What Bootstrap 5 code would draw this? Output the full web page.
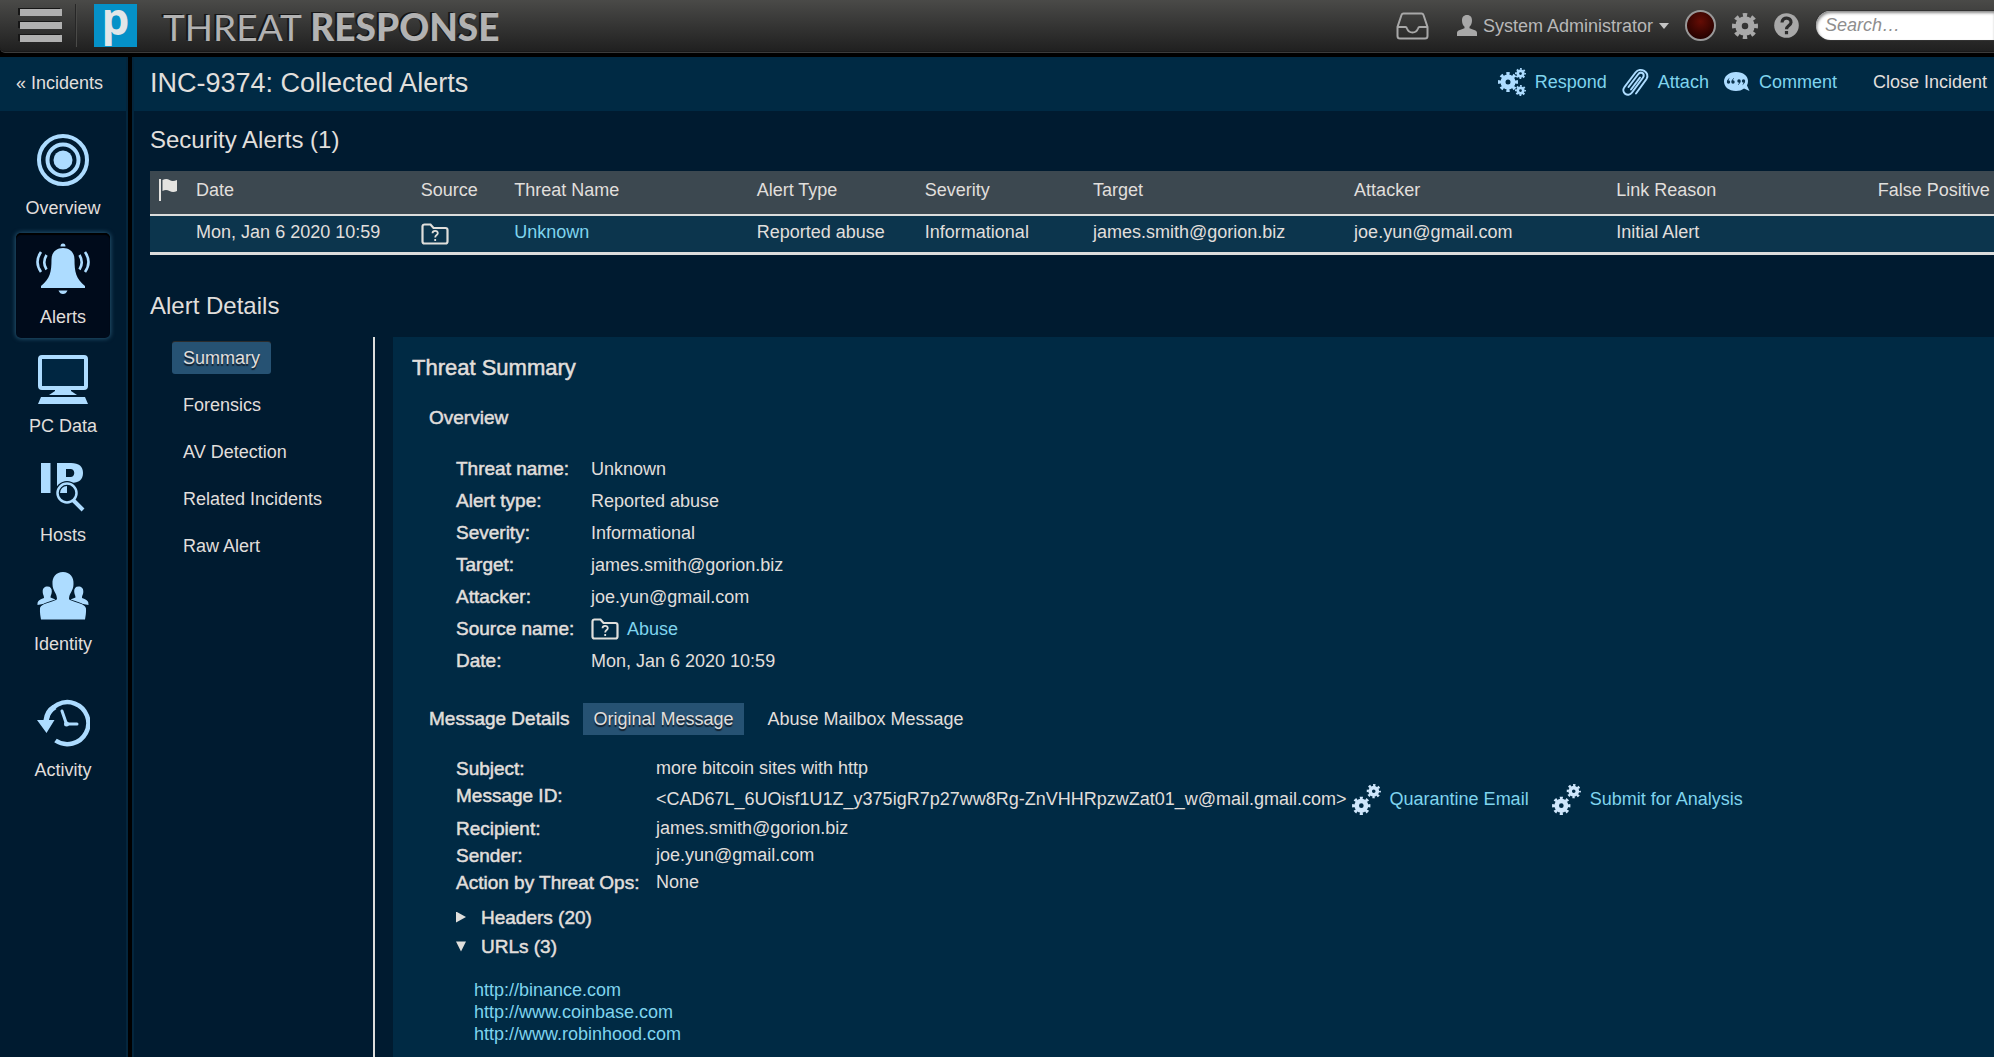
<!DOCTYPE html>
<html lang="en">
<head>
<meta charset="utf-8">
<meta name="viewport" content="width=device-width, initial-scale=1">
<title>Threat Response - INC-9374</title>
<link rel="stylesheet" href="https://cdn.jsdelivr.net/npm/bootstrap@5.3.0/dist/css/bootstrap.min.css">
<style>
:root{--ink:#e0dfdc;--deep:#001b30;--panel:#002a44;--sky:#addcff;--link:#7fd4ee;--pick:#265273}
body{font:18px/24px "Liberation Sans",Arial,sans-serif;color:var(--ink);background:#000}
a{color:var(--link);text-decoration:none}
a:hover{color:#fff}
h1,h2,h3,h4,dl,dd,dt{margin:0;font-weight:400}
svg{flex:none;display:block}
.plain{background:none;border:0;padding:0;color:inherit;font:inherit}
.ink{color:var(--ink)}
/* top bar */
.topbar{height:53px;background:linear-gradient(#4a4a48,#1f1f1f);border-bottom:1px solid #3c3c3c;border-radius:0 0 0 5px;box-shadow:inset 0 -1px #191919;color:#b8b8b8;padding:0 0 1px 20px}
.burger{width:42px;height:33px;justify-content:space-between}
.burger span{height:7px;background:#b0b0b0;box-shadow:-2px -1px #161616}
.sep{width:2px;height:43px;background:#262626;border-right:1px solid #4a4a48;margin-left:13px}
.brandmark{width:43px;height:43px;background:#0591c8;color:#e2e6e8;font:700 44px/28px "Open Sans",sans-serif;margin-left:17px;text-align:center}
.brand{font:400 37px/40px Lato,sans-serif;color:#b2b2b2;text-shadow:-2px -1px #161616;margin-left:26px;padding-top:2px}
.brand b{font-weight:900}
.user{gap:6px;margin-left:28px}
.caret{border:5px solid transparent;border-top:6px solid #c4c4c4;border-bottom:0}
.lamp{width:31px;height:31px;border-radius:50%;border:2px solid #999;background:radial-gradient(circle at 50% 35%,#650d05,#280200 75%)}
.search{width:178px;height:29px;border:0;border-radius:15px 0 0 15px;background:#fff;font:italic 18px "Liberation Sans",Arial,sans-serif;padding:0 9px;box-shadow:inset 1px 2px 3px #888,0 0 0 1px #333;margin-left:17px}
.search::placeholder{color:#8e8e8e}
/* side rail */
.rail{width:128px;background:var(--deep);border-right:2px solid #04263d}
.rail-list{padding-top:13px}
.titlebar{height:54px;background:var(--panel);padding-bottom:2px}
.rail-item{width:94px;padding:9px 0;margin-bottom:4px;gap:9px;color:var(--ink);border-radius:5px}
.rail-item:hover{color:#fff}
.rail-item svg{color:var(--sky)}
.rail-item.active{background:#000b1b;box-shadow:0 0 4px 1px #23506b,inset 0 2px 1px #000}
.late{margin-top:17px}
/* content */
.main{background:var(--deep);margin-left:4px;border-left:2px solid #04263d;min-width:0}
.content{padding:14px 0 0 16px}
.title-text{font-size:27px;line-height:30px}
.section-title{font-size:24px;line-height:30px}
.actions{gap:14px;padding:0 7px 2px 0}
.closer{margin-left:22px}
.alerts{table-layout:fixed;width:100%;margin:16px 0 36px}
.alerts th,.alerts td{font-weight:400;padding:0;white-space:nowrap}
.alerts th{background:#3c4850;height:44px;padding-bottom:6px;vertical-align:middle}
.alerts td{background:#0c354d;height:38px;padding-bottom:4px;vertical-align:middle}
.alerts thead{border-bottom:2px solid #dcdddc}
.alerts tbody{border-bottom:3px solid #dcdddc}
.alerts td svg{margin-top:5px}
.subnav{width:225px;padding:5px 0 0 22px;gap:15px;border-right:2px solid #dcdddc}
.pill{display:block;padding:4px 11px;color:var(--ink)}
.pill.active{background:var(--pick);border-radius:3px;box-shadow:0 -1px #2c2c2c;text-shadow:0 2px 1px #101c28}
.tabs-row{gap:14px;margin:26px 0 20px}
.tab{padding:4px 10px;color:var(--ink)}
.tab.active{background:var(--pick);text-shadow:0 2px 1px #101c28}
.panel-box{background:var(--panel);margin-left:18px;padding:16px 19px 8px;min-width:0}
.panel-body{margin-left:17px}
.strong{font-size:19px;line-height:24px;-webkit-text-stroke:.5px currentColor}
h4.strong{font-size:19px}
.panel-title{font-size:22px;line-height:30px;-webkit-text-stroke:.5px currentColor;margin-bottom:23px}
.facts{display:grid;margin-left:27px}
.facts.over{grid-template-columns:135px 1fr;grid-auto-rows:32px;align-items:center;margin-top:23px}
.facts.msg{grid-template-columns:200px 1fr;grid-auto-rows:minmax(27px,auto)}
.facts.msg dt,.facts.msg dd{line-height:27px}
.msgid{padding-top:2px}
.runner{gap:9px;margin-left:5px;margin-right:18px}
.folds{margin-top:7px}
.fold summary{list-style:none;line-height:29px;gap:15px}
.fold summary::-webkit-details-marker{display:none}
.tri{width:10px;height:11px;background:currentColor;clip-path:polygon(0 0,100% 50%,0 100%)}
.fold[open] .tri{clip-path:polygon(0 10%,100% 10%,50% 100%)}
.urls{margin:18px 0 0 18px;line-height:22px}
</style>
</head>
<body>
<svg width="0" height="0" class="position-absolute" aria-hidden="true">
  <symbol id="cog" viewBox="-12 -12 24 24"><circle r="6" fill="none" stroke="currentColor" stroke-width="6"/><circle r="10" fill="none" stroke="currentColor" stroke-width="4" pathLength="16" stroke-dasharray="1 1" stroke-dashoffset=".5"/></symbol>
  <symbol id="folder" viewBox="0 0 28 22"><path d="M1.5 3.5a2 2 0 0 1 2-2h6l3 3.500h12a2 2 0 0 1 2 2v11.500a2 2 0 0 1-2 2h-21a2 2 0 0 1-2-2z" fill="none" stroke="currentColor" stroke-width="2.200"/><path d="M11.500 10.200c.2-3.400 5.500-3 5.300.1-.1 1.700-2.600 1.700-2.600 4.100M14.200 16v2" fill="none" stroke="currentColor" stroke-width="1.800"/></symbol>
  <symbol id="twocogs" viewBox="0 0 28 30"><use href="#cog" x="0" y="12" width="18" height="18"/><use href="#cog" x="14" y="0" width="14" height="14"/></symbol>
</svg>

<div class="min-vh-100 d-flex flex-column">
<header class="topbar d-flex align-items-center">
  <button class="plain burger d-flex flex-column" aria-label="Menu"><span></span><span></span><span></span></button>
  <div class="sep"></div>
  <div class="brandmark">p</div>
  <div class="brand">THREAT <b>RESPONSE</b></div>
  <div class="ms-auto d-flex align-items-center">
    <svg width="33" height="28" viewBox="0 0 33 28" fill="none" stroke="#a8a8a8" stroke-width="2"><path d="M7.500 1.500h18q1.500 0 2 1.500l4 12v9q0 2.500-2.500 2.500h-25q-2.500 0-2.500-2.500v-9l4-12q.5-1.500 2-1.500zM2 15h7.500q1 0 1.500 1.500 1.500 4 5.500 4t5.500-4q.5-1.500 1.500-1.500h7.500"/></svg>
    <button class="plain user d-flex align-items-center">
      <svg width="20" height="21" viewBox="0 0 20 21" fill="#a8a8a8"><path d="M10 0c3.500 0 5 2.400 5 5.400 0 2.500-.8 4.700-2.500 6.300v1.600l6 2.200q1.500.7 1.500 2.200V21H0v-3.300q0-1.500 1.500-2.200l6-2.200v-1.600C5.800 10.100 5 7.900 5 5.400 5 2.400 6.500 0 10 0z"/></svg>
      System Administrator<span class="caret"></span>
    </button>
    <div class="lamp ms-3"></div>
    <button class="plain ms-3" aria-label="Settings"><svg width="26" height="26" color="#a8a8a8"><use href="#cog"/></svg></button>
    <button class="plain ms-3" aria-label="Help"><svg width="25" height="25" viewBox="0 0 25 25"><circle cx="12.500" cy="12.500" r="12.300" fill="#a8a8a8"/><path d="M8 9.500c.3-6.200 9.300-5.600 9 0-.2 3-4.500 3-4.500 6.800M12.500 18v3.200" fill="none" stroke="#2c2c2c" stroke-width="3.200"/></svg></button>
    <input class="search" type="text" placeholder="Search…" aria-label="Search">
  </div>
</header>

<div class="d-flex flex-grow-1 mt-1">
  <nav class="rail flex-shrink-0">
    <div class="titlebar d-flex align-items-center ps-3"><a href="#" class="ink">« Incidents</a></div>
    <div class="rail-list d-flex flex-column align-items-center">
      <a href="#" class="rail-item d-flex flex-column align-items-center">
        <svg width="54" height="54" viewBox="0 0 54 54" fill="none" stroke="currentColor"><circle cx="27" cy="27" r="24" stroke-width="4"/><circle cx="27" cy="27" r="15.500" stroke-width="4"/><circle cx="27" cy="27" r="9.500" fill="currentColor" stroke="none"/></svg>
        Overview</a>
      <a href="#" class="rail-item active d-flex flex-column align-items-center">
        <svg width="54" height="54" viewBox="0 0 54 54" fill="currentColor"><path d="M24.500 4.500a2.500 3 0 0 1 5 0zM27 6c7 0 11.500 4.500 11.500 11.500 0 13 1.500 19 10.500 26.500v2H5v-2c9-7.500 10.500-13.500 10.500-26.500C15.500 10.500 20 6 27 6zM22.500 48.500h9q-1.500 3.500-4.500 3.500t-4.500-3.500z"/><path d="M5 10q-7 10 0 20M10.500 13q-4.500 7.500 0 14.500M49 10q7 10 0 20M43.500 13q4.500 7.500 0 14.500" fill="none" stroke="currentColor" stroke-width="2.600"/></svg>
        Alerts</a>
      <a href="#" class="rail-item d-flex flex-column align-items-center">
        <svg width="54" height="54" viewBox="0 0 54 54" fill="currentColor"><rect x="4" y="6" width="46" height="31" rx="2" fill="#002641" stroke="currentColor" stroke-width="4"/><path d="M19 38h16v2l6 4H13l6-4zM5 46h44l3 7H2z"/></svg>
        PC Data</a>
      <a href="#" class="rail-item d-flex flex-column align-items-center">
        <svg width="54" height="54" viewBox="0 0 54 54" fill="currentColor"><path d="M5 3h9.500v30H5zM21 3h14c8 0 12 3.500 12 10s-4 10-12 10h-5v10h-9zM30 9v8h4.500c5 0 5-8 0-8z" fill-rule="evenodd"/><circle cx="31" cy="33" r="12" fill="#001b30"/><path d="M24 33a7 7 0 0 1 7-7v7z"/><circle cx="31" cy="33" r="9.500" fill="none" stroke="currentColor" stroke-width="2.500"/><path d="M37.500 40.500l9.500 9.500" stroke="currentColor" stroke-width="4"/></svg>
        Hosts</a>
      <a href="#" class="rail-item d-flex flex-column align-items-center">
        <svg width="54" height="54" viewBox="0 0 54 54" fill="currentColor"><path d="M11.500 17.500c3 0 4.500 2 4.300 5 0 3-1.300 3.500-1.300 6l5 2q-3 3-18 5.500c0-4 .5-4.500 6.500-7 0-3-1.300-3-1.300-6.500-.2-3 1.800-5 4.800-5zM42.500 17.500c-3 0-4.500 2-4.300 5 0 3 1.300 3.500 1.300 6l-5 2q3 3 18 5.500c0-4-.5-4.500-6.500-7 0-3 1.300-3 1.300-6.500.2-3-1.800-5-4.800-5z"/><path d="M27 3c7 0 11 5 10.500 12 0 7-4.500 9-4.500 15 1 2.500 16.500 4 17 9.500.3 4-.5 8-1 11H5c-.5-3-1.300-7-1-11C4.500 34 20 32.500 21 30c0-6-4.500-8-4.500-15C16 8 20 3 27 3z" stroke="#001b30" stroke-width="1.500" paint-order="stroke"/></svg>
        Identity</a>
      <a href="#" class="rail-item late d-flex flex-column align-items-center">
        <svg width="54" height="54" viewBox="0 0 54 54" fill="none" stroke="currentColor"><path d="M19.500 45.500A21 21 0 1 0 11 23" stroke-width="4.500"/><path d="M7.500 25q1-10 9-15l4 4q-7 4-7.500 11l5.500 0L10.500 38 1 25z" fill="currentColor" stroke="none"/><path d="M26 16l4.500 13H41" stroke-width="3" stroke-linecap="round"/><circle cx="30.500" cy="29" r="2.500" fill="currentColor" stroke="none"/></svg>
        Activity</a>
    </div>
  </nav>

  <main class="main flex-grow-1 d-flex flex-column">
    <div class="titlebar d-flex align-items-center justify-content-between">
      <h1 class="title-text ms-3">INC-9374: Collected Alerts</h1>
      <div class="actions d-flex align-items-center">
        <a href="#" class="d-flex align-items-center"><svg class="me-2" width="29" height="28" viewBox="0 0 29 28" color="#addcff"><use href="#cog" x="0" y="4" width="20" height="20"/><use href="#cog" x="17" y="0" width="11" height="11"/><use href="#cog" x="17" y="17" width="11" height="11"/></svg>Respond</a>
        <a href="#" class="d-flex align-items-center"><svg class="me-2" width="29" height="29" viewBox="0 0 29 29" fill="none" stroke="#addcff" stroke-width="2" stroke-linecap="round"><path d="M7.500 19L17 6.500c3-4 7.500-.5 5 3L11 24.500c-4 5.500-11.500 0-7.500-5.500L14.500 4.500c4.500-6 15-.5 11 6.500L15 25.500M19 9.500l-9 12"/></svg>Attach</a>
        <a href="#" class="d-flex align-items-center"><svg class="me-2" width="28" height="20" viewBox="0 0 28 20"><path d="M13 0c7.500 0 12 4 12 9 0 1.500-.3 3-1 4.500l2.500 5.500-5.500-2.500C19 18.200 16 19 13 19 5.500 19 1 14.500 1 9.500S5.500 0 13 0z" fill="#addcff"/><g fill="#0b3450"><circle cx="5.500" cy="10" r="1.700"/><circle cx="10" cy="10" r="1.700"/><circle cx="16" cy="9" r="1.700"/><circle cx="20.500" cy="9" r="1.700"/></g><path d="M4.500 9.500q0-2 1.800-3M9 9.500q0-2 1.800-3M17 9.500q0 2-1.800 3M21.500 9.500q0 2-1.800 3" fill="none" stroke="#0b3450"/></svg>Comment</a>
        <a href="#" class="closer ink">Close Incident</a>
      </div>
    </div>
    <div class="content d-flex flex-column flex-grow-1">
      <h2 class="section-title">Security Alerts (1)</h2>
      <table class="alerts">
        <colgroup><col style="width:2.50%"><col style="width:12.18%"><col style="width:5.07%"><col style="width:13.15%"><col style="width:9.12%"><col style="width:9.12%"><col style="width:14.16%"><col style="width:14.22%"><col style="width:14.18%"><col></colgroup>
        <thead><tr>
          <th aria-label="Flag"><svg class="ms-2" width="20" height="24" viewBox="0 0 20 24" fill="#e4e3e0"><path d="M1 1h2v22H1zM4.500 2q4-2 7 0t7.500 0v11q-4 2-7.500 0t-7 0z"/></svg></th>
          <th>Date</th><th>Source</th><th>Threat Name</th><th>Alert Type</th><th>Severity</th><th>Target</th><th>Attacker</th><th>Link Reason</th><th>False Positive</th>
        </tr></thead>
        <tbody><tr>
          <td></td><td>Mon, Jan 6 2020 10:59</td><td><svg width="28" height="22"><use href="#folder"/></svg></td><td><a href="#">Unknown</a></td><td>Reported abuse</td><td>Informational</td><td>james.smith@gorion.biz</td><td>joe.yun@gmail.com</td><td>Initial Alert</td><td></td>
        </tr></tbody>
      </table>
      <h2 class="section-title mb-3">Alert Details</h2>
      <div class="d-flex flex-grow-1">
        <nav class="subnav flex-shrink-0 d-flex flex-column align-items-start">
          <a href="#" class="pill active">Summary</a>
          <a href="#" class="pill">Forensics</a>
          <a href="#" class="pill">AV Detection</a>
          <a href="#" class="pill">Related Incidents</a>
          <a href="#" class="pill">Raw Alert</a>
        </nav>
        <section class="panel-box flex-grow-1">
          <h3 class="panel-title">Threat Summary</h3>
          <div class="panel-body">
          <h4 class="strong">Overview</h4>
          <dl class="facts over">
            <dt class="strong">Threat name:</dt><dd>Unknown</dd>
            <dt class="strong">Alert type:</dt><dd>Reported abuse</dd>
            <dt class="strong">Severity:</dt><dd>Informational</dd>
            <dt class="strong">Target:</dt><dd>james.smith@gorion.biz</dd>
            <dt class="strong">Attacker:</dt><dd>joe.yun@gmail.com</dd>
            <dt class="strong">Source name:</dt><dd class="d-flex align-items-center gap-2"><svg width="28" height="22"><use href="#folder"/></svg><a href="#">Abuse</a></dd>
            <dt class="strong">Date:</dt><dd>Mon, Jan 6 2020 10:59</dd>
          </dl>
          <div class="tabs-row d-flex align-items-center">
            <h4 class="strong">Message Details</h4>
            <button class="plain tab active">Original Message</button>
            <button class="plain tab">Abuse Mailbox Message</button>
          </div>
          <dl class="facts msg">
            <dt class="strong">Subject:</dt><dd>more bitcoin sites with http</dd>
            <dt class="strong">Message ID:</dt>
            <dd class="msgid d-flex align-items-center">&lt;CAD67L_6UOisf1U1Z_y375igR7p27ww8Rg-ZnVHHRpzwZat01_w@mail.gmail.com&gt;
              <a href="#" class="runner d-flex align-items-center"><svg width="29" height="31" viewBox="0 0 28 30" color="#cfe6fb"><use href="#twocogs"/></svg>Quarantine Email</a>
              <a href="#" class="runner d-flex align-items-center"><svg width="29" height="31" viewBox="0 0 28 30" color="#cfe6fb"><use href="#twocogs"/></svg>Submit for Analysis</a></dd>
            <dt class="strong">Recipient:</dt><dd>james.smith@gorion.biz</dd>
            <dt class="strong">Sender:</dt><dd>joe.yun@gmail.com</dd>
            <dt class="strong">Action by Threat Ops:</dt><dd>None</dd>
          </dl>
          <div class="facts folds">
            <details class="fold"><summary class="strong d-flex align-items-center"><span class="tri"></span>Headers (20)</summary></details>
            <details class="fold" open><summary class="strong d-flex align-items-center"><span class="tri"></span>URLs (3)</summary>
              <div class="urls d-flex flex-column align-items-start"><a href="#">http://binance.com</a><a href="#">http://www.coinbase.com</a><a href="#">http://www.robinhood.com</a></div>
            </details>
          </div>
          </div>
        </section>
      </div>
    </div>
  </main>
</div>
</div>
<script src="https://cdn.jsdelivr.net/npm/bootstrap@5.3.0/dist/js/bootstrap.bundle.min.js"></script>
</body>
</html>
